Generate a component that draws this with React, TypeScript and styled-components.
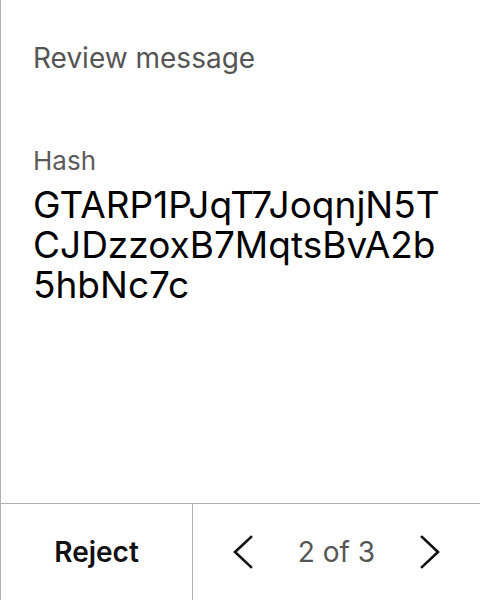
import React from "react";
import styled, { createGlobalStyle } from "styled-components";

const Global = createGlobalStyle`
  html, body { margin: 0; padding: 0; background: #fff; }
  body { font-family: Inter, "Noto Sans", sans-serif; }
`;

const Screen = styled.div`
  width: 480px;
  height: 600px;
  box-sizing: border-box;
  border-left: 1px solid #b0b0b0;
  display: flex;
  flex-direction: column;
`;

const Body = styled.div`
  flex: 1;
  padding: 41px 32px 0 32px;
  display: flex;
  flex-direction: column;
`;

const Title = styled.div`
  font-size: 28px;
  line-height: 34px;
  color: #555;
`;

const Field = styled.div`
  margin-top: 70px;
  display: flex;
  flex-direction: column;
  gap: 8px;
`;

const Label = styled.div`
  font-size: 26px;
  line-height: 32px;
  color: #5c5c5c;
`;

const Value = styled.div`
  font-size: 37px;
  line-height: 40px;
  color: #000;
  word-break: break-all;
`;

const Footer = styled.div`
  height: 96px;
  border-top: 1px solid #b0b0b0;
  display: flex;
`;

const RejectButton = styled.button`
  width: 192px;
  border: none;
  border-right: 1px solid #b0b0b0;
  background: none;
  font-family: inherit;
  font-size: 28px;
  font-weight: 600;
  color: #111;
  padding: 0;
`;

const Pager = styled.div`
  flex: 1;
  display: flex;
  align-items: center;
  justify-content: space-between;
  padding: 0 37px 0 37px;
`;

const NavButton = styled.button`
  border: none;
  background: none;
  padding: 0;
  width: 26px;
  height: 40px;
  display: flex;
  align-items: center;
  justify-content: center;
`;

const PageText = styled.span`
  font-size: 28px;
  color: #555;
`;

const Chevron = ({ dir }: { dir: "left" | "right" }) => (
  <svg width="22" height="34" viewBox="0 0 22 34" fill="none">
    <path
      d={dir === "left" ? "M19 2 L3 17 L19 32" : "M3 2 L19 17 L3 32"}
      stroke="#111"
      strokeWidth="2.6"
      strokeLinecap="square"
    />
  </svg>
);

export default function App() {
  return (
    <>
      <Global />
      <Screen>
        <Body>
          <Title>Review message</Title>
          <Field>
            <Label>Hash</Label>
            <Value>GTARP1PJqT7JoqnjN5TCJDzzoxB7MqtsBvA2b5hbNc7c</Value>
          </Field>
        </Body>
        <Footer>
          <RejectButton>Reject</RejectButton>
          <Pager>
            <NavButton aria-label="Previous">
              <Chevron dir="left" />
            </NavButton>
            <PageText>2 of 3</PageText>
            <NavButton aria-label="Next">
              <Chevron dir="right" />
            </NavButton>
          </Pager>
        </Footer>
      </Screen>
    </>
  );
}
